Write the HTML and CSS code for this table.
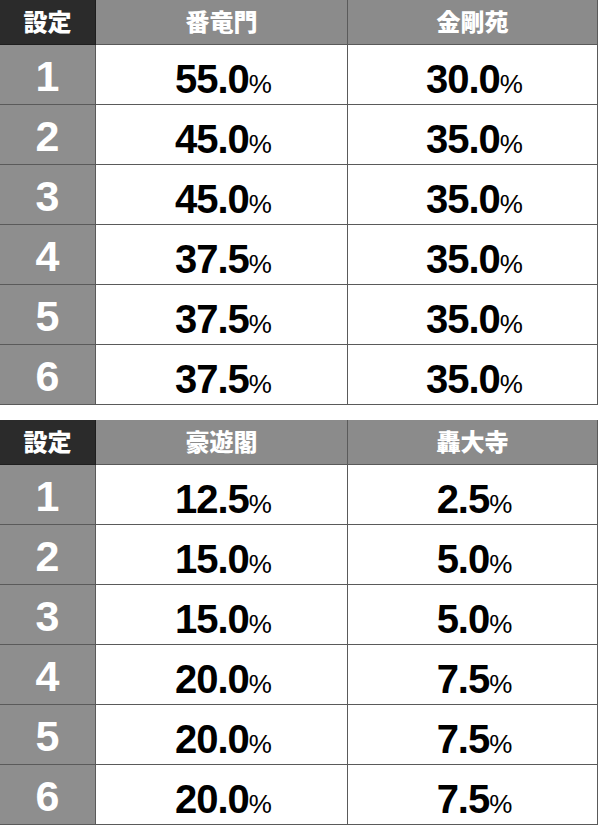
FILE: index.html
```html
<!DOCTYPE html>
<html lang="ja">
<head>
<meta charset="utf-8">
<link rel="stylesheet" href="styles.css">
</head>
<body>
<div class="page">
  <div class="tbl">
    <div class="cell hset">設定</div><div class="cell hcol">番竜門</div><div class="cell hcol">金剛苑</div>
    <div class="cell set">1</div><div class="cell val">55.0<span class="pct">%</span></div><div class="cell val">30.0<span class="pct">%</span></div>
    <div class="cell set">2</div><div class="cell val">45.0<span class="pct">%</span></div><div class="cell val">35.0<span class="pct">%</span></div>
    <div class="cell set">3</div><div class="cell val">45.0<span class="pct">%</span></div><div class="cell val">35.0<span class="pct">%</span></div>
    <div class="cell set">4</div><div class="cell val">37.5<span class="pct">%</span></div><div class="cell val">35.0<span class="pct">%</span></div>
    <div class="cell set">5</div><div class="cell val">37.5<span class="pct">%</span></div><div class="cell val">35.0<span class="pct">%</span></div>
    <div class="cell set">6</div><div class="cell val">37.5<span class="pct">%</span></div><div class="cell val">35.0<span class="pct">%</span></div>
  </div>
  <div class="tbl">
    <div class="cell hset">設定</div><div class="cell hcol">豪遊閣</div><div class="cell hcol">轟大寺</div>
    <div class="cell set">1</div><div class="cell val">12.5<span class="pct">%</span></div><div class="cell val">2.5<span class="pct">%</span></div>
    <div class="cell set">2</div><div class="cell val">15.0<span class="pct">%</span></div><div class="cell val">5.0<span class="pct">%</span></div>
    <div class="cell set">3</div><div class="cell val">15.0<span class="pct">%</span></div><div class="cell val">5.0<span class="pct">%</span></div>
    <div class="cell set">4</div><div class="cell val">20.0<span class="pct">%</span></div><div class="cell val">7.5<span class="pct">%</span></div>
    <div class="cell set">5</div><div class="cell val">20.0<span class="pct">%</span></div><div class="cell val">7.5<span class="pct">%</span></div>
    <div class="cell set">6</div><div class="cell val">20.0<span class="pct">%</span></div><div class="cell val">7.5<span class="pct">%</span></div>
  </div>
</div>
</body>
</html>
```
FILE: styles.css
```css
html, body {
  margin: 0;
  padding: 0;
  background: #fff;
}
.page {
  width: 598px;
  display: flex;
  flex-direction: column;
  gap: 15px;
}
.tbl {
  display: grid;
  grid-template-columns: 96px 252px 250px;
  grid-template-rows: 45px repeat(6, 60px);
  font-family: "Liberation Sans", "Noto Sans CJK JP", sans-serif;
}
.cell {
  box-sizing: border-box;
  border-right: 1px solid #5a5a5a;
  border-bottom: 1px solid #5a5a5a;
  display: flex;
  align-items: center;
  justify-content: center;
  overflow: hidden;
}
.hset, .hcol {
  color: #fff;
  font-family: "Noto Sans CJK JP", sans-serif;
  font-weight: 900;
  font-size: 24px;
  line-height: 1;
  padding-bottom: 2px;
}
.hset {
  background: #2b2b2b;
  border-color: #1e1e1e;
}
.hcol {
  background: #8b8b8b;
}
.set {
  background: #8e8e8e;
  color: #fff;
  font-weight: bold;
  font-size: 43px;
  line-height: 1;
  padding-top: 3px;
}
.val {
  color: #000;
  font-weight: bold;
  font-size: 40px;
  letter-spacing: -1px;
  line-height: 1;
  padding-top: 8px;
  padding-left: 4px;
  align-items: baseline;
  align-content: center;
  flex-wrap: wrap;
}
.pct {
  font-weight: normal;
  font-size: 26px;
  letter-spacing: 0;
}
```
